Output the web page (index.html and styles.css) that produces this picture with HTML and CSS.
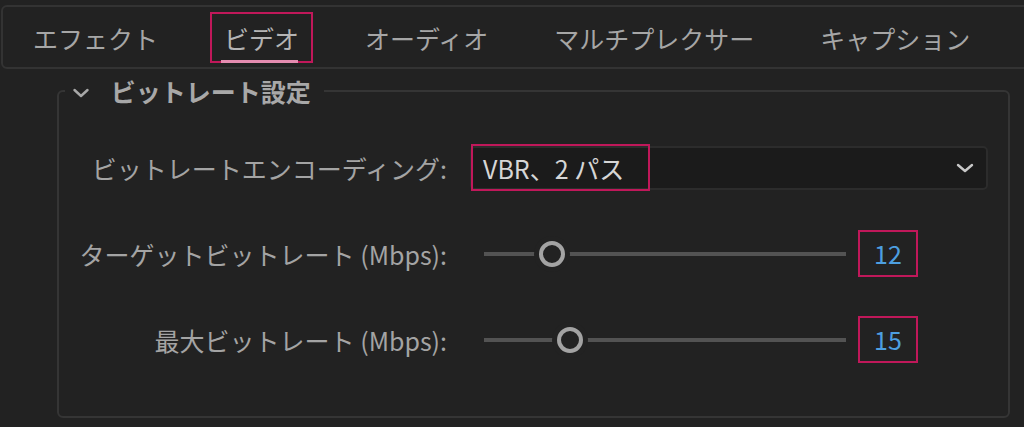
FILE: index.html
```html
<!DOCTYPE html>
<html>
<head>
    <title>ビデオ書き出し設定</title>
    <link rel="stylesheet" href="styles.css">
</head>
<body>
    <div class="tabs">
        <div class="tab">エフェクト</div>
        <div class="tab active">ビデオ</div>
        <div class="tab">オーディオ</div>
        <div class="tab">マルチプレクサー</div>
        <div class="tab">キャプション</div>
    </div>

    <fieldset class="group">
        <legend>
            <svg class="chev" width="16" height="10" viewBox="0 0 16 10">
                <path d="M1.5 2 L8 8 L14.5 2" fill="none" stroke="#a8a8a8" stroke-width="2.4" stroke-linecap="round" stroke-linejoin="round"/>
            </svg>
            ビットレート設定
        </legend>

        <div class="rows">
            <div class="label">ビットレートエンコーディング:</div>
            <div class="select">
                <span class="select-value">VBR、2 パス</span>
                <svg class="select-arrow" width="18" height="12" viewBox="0 0 18 12">
                    <path d="M2 3 L9 9 L16 3" fill="none" stroke="#c8c8c8" stroke-width="2.4" stroke-linecap="round" stroke-linejoin="round"/>
                </svg>
            </div>

            <div class="label">ターゲットビットレート (Mbps):</div>
            <div class="slider-row">
                <div class="slider">
                    <div class="track"></div>
                    <div class="thumb" style="left: 68px"></div>
                </div>
                <div class="value">12</div>
            </div>

            <div class="label">最大ビットレート (Mbps):</div>
            <div class="slider-row">
                <div class="slider">
                    <div class="track"></div>
                    <div class="thumb" style="left: 86px"></div>
                </div>
                <div class="value">15</div>
            </div>
        </div>
    </fieldset>
</body>
</html>
```

FILE: styles.css
```css
body {
    margin: 0;
    background-color: #222222;
    font-family: "Noto Sans CJK JP", "Noto Sans", sans-serif;
    color: #a4a4a4;
    overflow: hidden;
}

/* tab strip across the top */
.tabs {
    display: flex;
    align-items: center;
    gap: 38px;
    height: 64px;
    box-sizing: border-box;
    margin: 5px -20px 0 1px;
    padding-left: 16px;
    border: 2px solid #333333;
    border-radius: 6px;
}

.tab {
    position: relative;
    padding: 0 12px;
    height: 51px;
    line-height: 49px;
    box-sizing: border-box;
    border: 2px solid transparent;
    font-size: 25px;
    color: #a6a6a6;
    white-space: nowrap;
}

.tab.active {
    border-color: #c0185a; /* annotation box */
    color: #b4b4b4;
}

.tab.active::after {
    content: "";
    position: absolute;
    left: 9px;
    right: 13px;
    bottom: -2px;
    height: 3px;
    background-color: #e58cb0;
}

/* settings group */
.group {
    margin: 7px 14px 0 57px;
    padding: 0 20px 53px 0;
    border: 2px solid #353535;
    border-radius: 6px;
    min-width: 0;
}

.group legend {
    margin-left: 6px;
    padding: 0 13px 0 8px;
    font-size: 25px;
    font-weight: bold;
    line-height: 30px;
    color: #a8a8a8;
}

.chev {
    margin-right: 16px;
    vertical-align: 4px;
}

.rows {
    display: grid;
    grid-template-columns: 388px 1fr;
    grid-auto-rows: 47px;
    column-gap: 23px;
    row-gap: 39px;
    align-items: center;
    margin-top: 38px;
}

.label {
    text-align: right;
    font-size: 25px;
    white-space: nowrap;
    color: #a4a4a4;
}

.select {
    display: flex;
    align-items: center;
    justify-content: space-between;
    height: 44px;
    box-sizing: border-box;
    border: 2px solid #2c2c2c;
    border-radius: 5px;
    background-color: #1b1b1b;
}

.select-value {
    display: flex;
    align-items: center;
    width: 179px;
    height: 47px;
    box-sizing: border-box;
    margin-left: -1px;
    padding-left: 10px;
    border: 2px solid #c0185a; /* annotation box */
    font-size: 25px;
    color: #d6d6d6;
}

.select-arrow {
    margin-right: 12px;
}

.slider-row {
    display: flex;
    align-items: center;
    gap: 12px;
    padding-left: 14px;
}

.slider {
    position: relative;
    width: 362px;
    height: 30px;
}

.track {
    position: absolute;
    left: 0;
    right: 0;
    top: 13px;
    height: 4px;
    background-color: #535353;
}

.thumb {
    position: absolute;
    top: 2px;
    width: 26px;
    height: 26px;
    margin-left: -13px;
    box-sizing: border-box;
    border: 4px solid #a3a3a3;
    border-radius: 50%;
    background-color: #222222;
    box-shadow: 0 0 0 5px #222222;
}

.value {
    width: 60px;
    height: 47px;
    box-sizing: border-box;
    border: 2px solid #c0185a; /* annotation box */
    text-align: center;
    line-height: 43px;
    font-size: 25px;
    color: #4d9fe0;
}
```
